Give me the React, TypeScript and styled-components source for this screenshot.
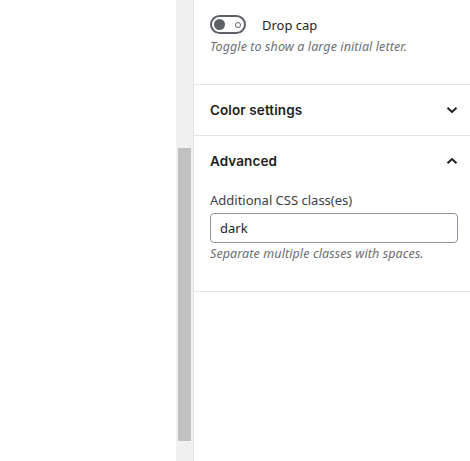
import React from "react";
import styled, { createGlobalStyle } from "styled-components";

const Global = createGlobalStyle`
  html, body { margin: 0; padding: 0; background: #ffffff; }
  body { font-family: "Noto Sans", "Open Sans", sans-serif; color: #1e1e1e; }
`;

const Page = styled.div`
  display: flex;
  height: 461px;
  width: 470px;
  overflow: hidden;
`;

const Blank = styled.div`
  width: 176px;
  flex: none;
`;

const ScrollTrack = styled.div`
  width: 17px;
  flex: none;
  background: #f0f0f0;
  box-sizing: border-box;
  padding: 148px 2px 20px 2px;
  display: flex;
  flex-direction: column;
`;

const ScrollThumb = styled.div`
  flex: 1;
  background: #c1c1c1;
`;

const Panel = styled.div`
  flex: 1;
  border-left: 1px solid #e2e4e7;
  display: flex;
  flex-direction: column;
  min-width: 0;
`;

const Section = styled.div<{ $pt?: number; $pb?: number }>`
  border-bottom: 1px solid #e2e4e7;
  padding: ${(p) => p.$pt ?? 0}px 11px ${(p) => p.$pb ?? 0}px 16px;
`;

const ToggleRow = styled.div`
  display: flex;
  align-items: center;
  height: 19px;
  gap: 16px;
`;

const ToggleTrack = styled.div`
  box-sizing: border-box;
  width: 36px;
  height: 19px;
  border: 2px solid #5d6167;
  border-radius: 10px;
  display: flex;
  align-items: center;
  padding: 0 3px 0 2px;
`;

const ToggleThumb = styled.div`
  width: 11px;
  height: 11px;
  border-radius: 50%;
  background: #5d6167;
`;

const ToggleRing = styled.div`
  margin-left: auto;
  width: 4px;
  height: 4px;
  border-radius: 50%;
  border: 1.5px solid #5d6167;
`;

const ControlLabel = styled.span`
  font-size: 13px;
  color: #1e1e1e;
`;

const Help = styled.p<{ $mt: number }>`
  margin: ${(p) => p.$mt}px 0 0 0;
  font-size: 12.5px;
  font-style: italic;
  color: #6b6f74;
  line-height: 18px;
  letter-spacing: 0.1px;
`;

const Header = styled.div<{ $h: number }>`
  display: flex;
  align-items: center;
  justify-content: space-between;
  height: ${(p) => p.$h}px;
`;

const Title = styled.span`
  font-family: "Inter", "Noto Sans", sans-serif;
  font-weight: 600;
  font-size: 13.5px;
  letter-spacing: 0.1px;
  color: #1e1e1e;
`;

const Chevron = styled.svg`
  width: 12px;
  height: 8px;
  margin-right: 1px;
`;

const FieldLabel = styled.label`
  display: block;
  margin-top: 5px;
  font-size: 13px;
  line-height: 18px;
  color: #3c4043;
`;

const Input = styled.div`
  box-sizing: border-box;
  margin-top: 4px;
  height: 30px;
  width: 248px;
  border: 1px solid #8d96a0;
  border-radius: 4px;
  padding: 0 9px;
  display: flex;
  align-items: center;
  font-size: 13px;
  color: #1e1e1e;
`;

const Down = () => (
  <Chevron viewBox="0 0 12 8">
    <polyline points="1.5,1.8 6,6 10.5,1.8" fill="none" stroke="#1e1e1e" strokeWidth="2" />
  </Chevron>
);

const Up = () => (
  <Chevron viewBox="0 0 12 8">
    <polyline points="1.5,6.2 6,2 10.5,6.2" fill="none" stroke="#1e1e1e" strokeWidth="2" />
  </Chevron>
);

export default function App() {
  return (
    <>
      <Global />
      <Page>
        <Blank />
        <ScrollTrack>
          <ScrollThumb />
        </ScrollTrack>
        <Panel>
          <Section $pt={15} $pb={28}>
            <ToggleRow>
              <ToggleTrack>
                <ToggleThumb />
                <ToggleRing />
              </ToggleTrack>
              <ControlLabel>Drop cap</ControlLabel>
            </ToggleRow>
            <Help $mt={4}>Toggle to show a large initial letter.</Help>
          </Section>
          <Section>
            <Header $h={50}>
              <Title>Color settings</Title>
              <Down />
            </Header>
          </Section>
          <Section $pb={28}>
            <Header $h={50}>
              <Title>Advanced</Title>
              <Up />
            </Header>
            <FieldLabel>Additional CSS class(es)</FieldLabel>
            <Input>dark</Input>
            <Help $mt={2}>Separate multiple classes with spaces.</Help>
          </Section>
        </Panel>
      </Page>
    </>
  );
}
